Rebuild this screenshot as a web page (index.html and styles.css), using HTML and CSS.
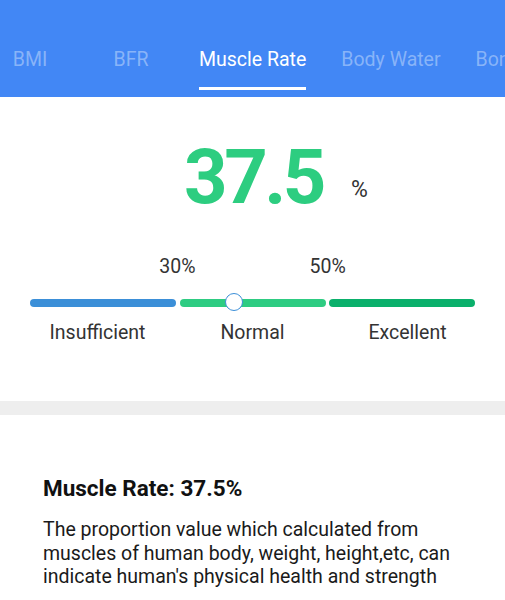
FILE: index.html
```html
<!DOCTYPE html>
<html lang="en">
<head>
    <meta charset="UTF-8">
    <meta name="viewport" content="width=device-width, initial-scale=1.0">
    <title>Muscle Rate</title>
    <link rel="stylesheet" href="styles.css">
</head>
<body>

<header class="tabbar">
    <div class="tabs">
        <div class="tab tab-narrow"><span>BMI</span></div>
        <div class="tab tab-narrow"><span>BFR</span></div>
        <div class="tab active"><span>Muscle Rate</span></div>
        <div class="tab"><span>Body Water</span></div>
        <div class="tab"><span>Bone Mass</span></div>
    </div>
</header>

<section class="result">
    <div class="value-row">
        <div></div>
        <div class="value">37.5</div>
        <div class="unit">%</div>
    </div>

    <div class="scale">
        <div class="marks">
            <span>30%</span>
            <span>50%</span>
        </div>
        <div class="bars">
            <div class="bar bar-low"></div>
            <div class="bar bar-normal">
                <div class="thumb" style="left: 37.5%"></div>
            </div>
            <div class="bar bar-high"></div>
        </div>
        <div class="levels">
            <span>Insufficient</span>
            <span>Normal</span>
            <span>Excellent</span>
        </div>
    </div>
</section>

<div class="divider"></div>

<section class="info">
    <h2>Muscle Rate: 37.5%</h2>
    <p>The proportion value which calculated from muscles of human body, weight, height,etc, can indicate human's physical health and strength</p>
</section>

</body>
</html>
```

FILE: styles.css
```css
body {
    font-family: Roboto, "Noto Sans", sans-serif;
    background-color: #fff;
    margin: 0;
    padding: 0;
    overflow: hidden;
}
.tabbar {
    background-color: #4287f5;
    height: 97px;
    overflow: hidden;
}
.tabs {
    display: flex;
    margin-left: -20.5px;
    white-space: nowrap;
}
.tab {
    flex-shrink: 0;
    padding: 48px 17.5px 0;
    font-size: 19.5px;
    line-height: 24px;
    color: rgba(255, 255, 255, 0.38);
    text-align: center;
}
.tab-narrow {
    width: 66px;
}
.tab span {
    display: inline-block;
    padding-bottom: 15px;
    border-bottom: 3px solid transparent;
}
.tab.active {
    color: #fff;
}
.tab.active span {
    border-bottom-color: #fff;
}
.result {
    padding-top: 42px;
}
.value-row {
    display: grid;
    grid-template-columns: 1fr auto 1fr;
    align-items: baseline;
}
.value {
    font-size: 76px;
    line-height: 76px;
    font-weight: bold;
    letter-spacing: -3.5px;
    padding-left: 2px;
    color: #2dcd80;
}
.unit {
    font-size: 23px;
    color: #333;
    margin-left: 28px;
    position: relative;
    top: -6px;
}
.scale {
    width: 445px;
    margin: 40px auto 0;
}
.marks {
    display: flex;
    justify-content: center;
    gap: 114px;
    font-size: 19.5px;
    line-height: 24px;
    color: #333;
}
.bars {
    display: flex;
    gap: 3.5px;
    margin-top: 19.5px;
}
.bar {
    flex: 1;
    height: 8px;
    border-radius: 4px;
    position: relative;
}
.bar-low {
    background-color: #3b8fd8;
}
.bar-normal {
    background-color: #2ecc82;
}
.bar-high {
    background-color: #0ab06b;
}
.thumb {
    position: absolute;
    top: 50%;
    width: 16px;
    height: 16px;
    margin: -9.5px 0 0 -9.5px;
    border: 1.5px solid #3b8fd8;
    border-radius: 50%;
    background-color: #fff;
}
.levels {
    display: flex;
    margin-top: 14.5px;
    font-size: 19.5px;
    line-height: 24px;
    color: #333;
}
.levels span {
    flex: 1;
    text-align: center;
}
.levels span:first-child {
    margin-left: -10px;
}
.levels span:last-child {
    margin-right: -10px;
}
.divider {
    height: 14px;
    margin-top: 55.5px;
    background-color: #eeeeee;
}
.info {
    padding: 60.5px 43px 0;
    color: #1a1a1a;
}
.info h2 {
    margin: 0;
    font-size: 22.5px;
    line-height: 26px;
    font-weight: bold;
    color: #111;
}
.info p {
    margin: 17px 0 0;
    font-size: 19.5px;
    line-height: 23.5px;
}
```
